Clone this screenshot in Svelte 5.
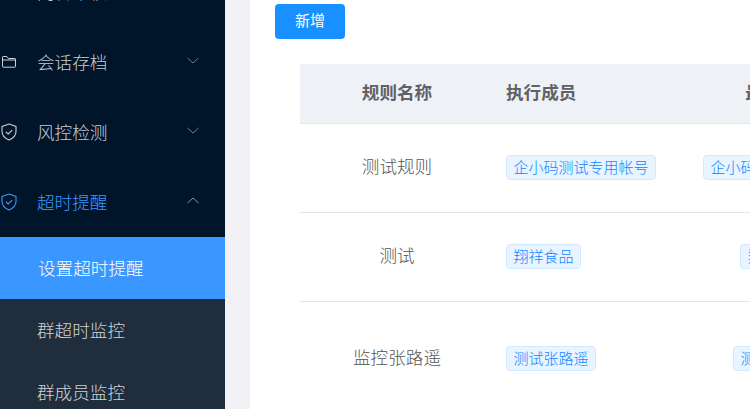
<script>
  const menus = [
    { label: '内容审核', icon: 'folder', arrow: 'none' },
    { label: '会话存档', icon: 'folder', arrow: 'down' },
    { label: '风控检测', icon: 'shield', arrow: 'down' },
    { label: '超时提醒', icon: 'shield', arrow: 'up', active: true }
  ];
  const subs = [
    { label: '设置超时提醒', active: true },
    { label: '群超时监控' },
    { label: '群成员监控' }
  ];
  const rows = [
    { name: '测试规则', a: '企小码测试专用帐号', b: '企小码测试专用帐号', cls: 'r1' },
    { name: '测试', a: '翔祥食品', b: '翔祥食品', cls: 'r2' },
    { name: '监控张路遥', a: '测试张路遥', b: '测试张路遥', cls: 'r3' }
  ];
</script>

<div class="page">
  <aside class="side">
    <div class="scroll">
      {#each menus as m}
        <div class="item" class:on={m.active}>
          {#if m.icon === 'folder'}
            <svg class="ic" viewBox="0 0 16 14" width="16" height="14" fill="none" stroke="currentColor" stroke-width="1">
              <path d="M1.500 11.500V2.200c0-.4.3-.7.7-.7h3.600l1.600 2h6.400c.4 0 .7.3.7.7v7.300c0 .4-.3.7-.7.7H2.200c-.4 0-.7-.3-.7-.7z"/>
              <path d="M1.500 5h13"/>
            </svg>
          {:else}
            <svg class="ic" viewBox="0 0 16 18" width="16" height="18" fill="none" stroke="currentColor" stroke-width="1.100">
              <path d="M8 1l7 2.400v5.200c0 4-3 6.800-7 8.400-4-1.600-7-4.400-7-8.400V3.400z"/>
              <path d="M4.800 8.800l2.400 2.200 4-3.800"/>
            </svg>
          {/if}
          <span class="label">{m.label}</span>
          {#if m.arrow !== 'none'}
            <svg class="arrow" viewBox="0 0 12 7" width="12" height="7" fill="none" stroke="currentColor" stroke-width="1">
              {#if m.arrow === 'up'}
                <path d="M.5 6L6 1l5.500 5"/>
              {:else}
                <path d="M.5 1L6 6l5.500-5"/>
              {/if}
            </svg>
          {/if}
        </div>
      {/each}
      <div class="subs">
        {#each subs as s}
          <div class="sub" class:on={s.active}>{s.label}</div>
        {/each}
      </div>
    </div>
  </aside>
  <main class="panel">
    <button class="add">新增</button>
    <div class="wrap">
      <table>
        <colgroup><col class="c1" /><col class="c2" /><col class="c3" /></colgroup>
        <thead>
          <tr><th class="mid">规则名称</th><th>执行成员</th><th class="mid last">最后执行</th></tr>
        </thead>
        <tbody>
          {#each rows as r}
            <tr class={r.cls}>
              <td class="mid name">{r.name}</td>
              <td><span class="tag">{r.a}</span></td>
              <td class="mid"><span class="tag">{r.b}</span></td>
            </tr>
          {/each}
        </tbody>
      </table>
    </div>
  </main>
</div>

<style>
  :global(body) {
    margin: 0;
    background: #f1f1f6;
    font-family: "Noto Sans CJK SC", "Liberation Sans", sans-serif;
  }
  .page {
    display: flex;
    height: 409px;
    width: 750px;
    overflow: hidden;
    background: #f1f1f6;
  }
  .side {
    width: 225px;
    flex: none;
    background: #001529;
    overflow: hidden;
  }
  .scroll { margin-top: -43px; }
  .item {
    height: 70px;
    display: flex;
    align-items: center;
    color: rgba(255, 255, 255, 0.8);
    font-size: 17.6px;
    font-weight: 300;
  }
  .item.on { color: #3a97ff; }
  .ic { flex: none; margin-left: 1px; }
  .label { margin-left: 20px; flex: 1; line-height: 24px; }
  .arrow { flex: none; margin-right: 26px; margin-bottom: 3px; color: rgba(255, 255, 255, 0.45); }
  .item.on .arrow { color: rgba(255, 255, 255, 0.55); }
  .subs { background: #1f2d3d; }
  .sub {
    height: 62px;
    line-height: 61px;
    padding-left: 37px;
    font-size: 17.6px;
    font-weight: 300;
    color: rgba(255, 255, 255, 0.8);
  }
  .sub.on { background: #3a97ff; color: #fff; padding-left: 38px; }
  .panel {
    margin-left: 25px;
    flex: 1;
    min-width: 0;
    background: #fff;
    overflow: hidden;
  }
  .add {
    display: block;
    margin: 4px 0 0 25px;
    width: 70px;
    height: 35px;
    border: 0;
    border-radius: 4px;
    background: #1890ff;
    color: #fff;
    font: inherit;
    font-size: 15px;
    font-weight: 400;
    line-height: 32px;
    padding: 0 0 3px;
  }
  .wrap { margin: 25px 0 0 50px; }
  table {
    border-collapse: collapse;
    table-layout: fixed;
    width: 565px;
    font-size: 17.6px;
    font-weight: 300;
    color: #555;
  }
  .c1 { width: 194px; }
  .c2 { width: 197px; }
  .c3 { width: 174px; }
  th {
    height: 59px;
    background: #eef1f6;
    border-bottom: 1px solid #dfe6ec;
    text-align: left;
    padding: 0 12px 2px;
    box-sizing: border-box;
    font-weight: 700;
    color: #606266;
    font-size: 17.6px;
    line-height: 24px;
  }
  th.last { padding-left: 17px; }
  td {
    box-sizing: border-box;
    padding: 0 12px 1px;
    border-bottom: 1px solid #dfe6ec;
    text-align: left;
    line-height: 24px;
  }
  td.name { padding-bottom: 3px; }
  th.mid, td.mid { text-align: center; }
  .r1 td { height: 89px; }
  .r2 td { height: 89px; }
  .r3 td { height: 115px; }
  .tag {
    display: block;
    width: fit-content;
    height: 25px;
    line-height: 22px;
    box-sizing: border-box;
    padding: 0 6.5px;
    border: 1px solid #d1e9ff;
    border-radius: 4px;
    background: #e8f4ff;
    color: #0f87ff;
    font-size: 15px;
    font-weight: 300;
    white-space: nowrap;
  }
  td.mid .tag { margin: 0 auto; }
</style>
